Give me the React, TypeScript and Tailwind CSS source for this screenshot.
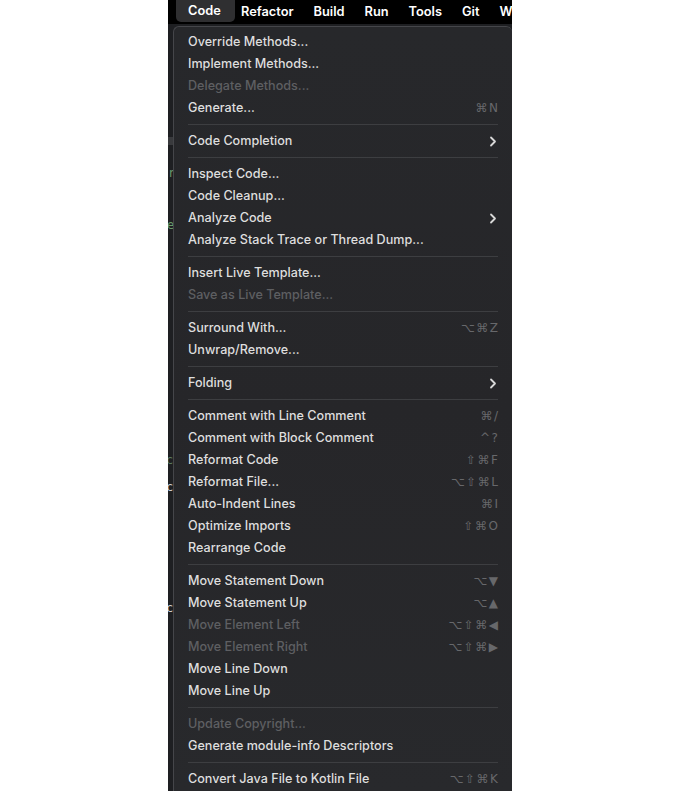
import React from "react";

type Item = {
  label: string;
  shortcut?: string;
  disabled?: boolean;
  submenu?: boolean;
};

// null marks a separator
const items: (Item | null)[] = [
  { label: "Override Methods..." },
  { label: "Implement Methods..." },
  { label: "Delegate Methods...", disabled: true },
  { label: "Generate...", shortcut: "⌘N" },
  null,
  { label: "Code Completion", submenu: true },
  null,
  { label: "Inspect Code..." },
  { label: "Code Cleanup..." },
  { label: "Analyze Code", submenu: true },
  { label: "Analyze Stack Trace or Thread Dump..." },
  null,
  { label: "Insert Live Template..." },
  { label: "Save as Live Template...", disabled: true },
  null,
  { label: "Surround With...", shortcut: "⌥⌘Z" },
  { label: "Unwrap/Remove..." },
  null,
  { label: "Folding", submenu: true },
  null,
  { label: "Comment with Line Comment", shortcut: "⌘/" },
  { label: "Comment with Block Comment", shortcut: "^?" },
  { label: "Reformat Code", shortcut: "⇧⌘F" },
  { label: "Reformat File...", shortcut: "⌥⇧⌘L" },
  { label: "Auto-Indent Lines", shortcut: "⌘I" },
  { label: "Optimize Imports", shortcut: "⇧⌘O" },
  { label: "Rearrange Code" },
  null,
  { label: "Move Statement Down", shortcut: "⌥▼" },
  { label: "Move Statement Up", shortcut: "⌥▲" },
  { label: "Move Element Left", shortcut: "⌥⇧⌘◀", disabled: true },
  { label: "Move Element Right", shortcut: "⌥⇧⌘▶", disabled: true },
  { label: "Move Line Down" },
  { label: "Move Line Up" },
  null,
  { label: "Update Copyright...", disabled: true },
  { label: "Generate module-info Descriptors" },
  null,
  { label: "Convert Java File to Kotlin File", shortcut: "⌥⇧⌘K" },
];

const menuBar = ["Refactor", "Build", "Run", "Tools", "Git", "W"];

function Chevron() {
  return (
    <svg width="8" height="11" viewBox="0 0 8 11" fill="none" className="mr-[1px]">
      <path
        d="M2 1.5 L6 5.5 L2 9.5"
        stroke="#d8d8d8"
        strokeWidth="1.8"
        strokeLinecap="round"
        strokeLinejoin="round"
      />
    </svg>
  );
}

function MenuRow({ item }: { item: Item }) {
  return (
    <div
      className={`flex h-[22px] items-center justify-between text-[12.6px] font-medium ${
        item.disabled ? "text-[#5e5f62]" : "text-[#dedede]"
      }`}
    >
      <span>{item.label}</span>
      {item.shortcut && (
        <span className="font-['DejaVu_Sans',sans-serif] text-[12px] tracking-[1.5px] text-[#67686b] mr-[-1.5px]">
          {item.shortcut}
        </span>
      )}
      {item.submenu && <Chevron />}
    </div>
  );
}

export default function App() {
  return (
    <div className="flex h-[791px] w-[680px] overflow-hidden bg-white font-['Inter',sans-serif]">
      <div className="ml-[168px] flex w-[344px] flex-col bg-[#1e1f22]">
        <div className="flex h-[24px] shrink-0 items-center overflow-hidden bg-black text-[12.8px] font-semibold text-white">
          <div className="ml-[8px] flex h-[22px] w-[59px] shrink-0 items-center self-start rounded-b-[5px] bg-[#2f2f31] pl-[12px]">
            Code
          </div>
          <div className="ml-[6px] flex shrink-0 gap-[20px]">
            {menuBar.map((m) => (
              <span key={m}>{m}</span>
            ))}
          </div>
        </div>

        <div className="flex min-h-0 flex-1">
          <div className="relative w-[5px] shrink-0 overflow-hidden font-['DejaVu_Sans_Mono',monospace] text-[12px]">
            <div className="absolute left-0 top-[113px] h-[8px] w-[5px] bg-[#393a3d]" />
            <span className="absolute left-[0px] top-[140px] text-[#6a9a6a]">r</span>
            <span className="absolute left-[-1px] top-[192px] text-[#6a9a6a]">e</span>
            <span className="absolute left-[-2px] top-[427px] text-[#5b7a5f]">c</span>
            <span className="absolute left-[-2px] top-[454px] text-[#cfcfcf]">c</span>
            <span className="absolute left-[-2px] top-[575px] text-[#cfcfcf]">c</span>
          </div>

          <div className="mt-[2px] flex-1 rounded-tl-[6px] rounded-tr-[6px] border-l border-t border-[#45464a] bg-gradient-to-b from-[#27282b] via-[#262629] to-[#28292c] pl-[14px] pr-[14px] pt-[4px]">
            {items.map((item, i) =>
              item ? (
                <MenuRow key={i} item={item} />
              ) : (
                <div key={i} className="flex h-[11px] items-center">
                  <div className="h-px w-full bg-[#3d3e41]" />
                </div>
              )
            )}
          </div>
        </div>
      </div>
    </div>
  );
}
